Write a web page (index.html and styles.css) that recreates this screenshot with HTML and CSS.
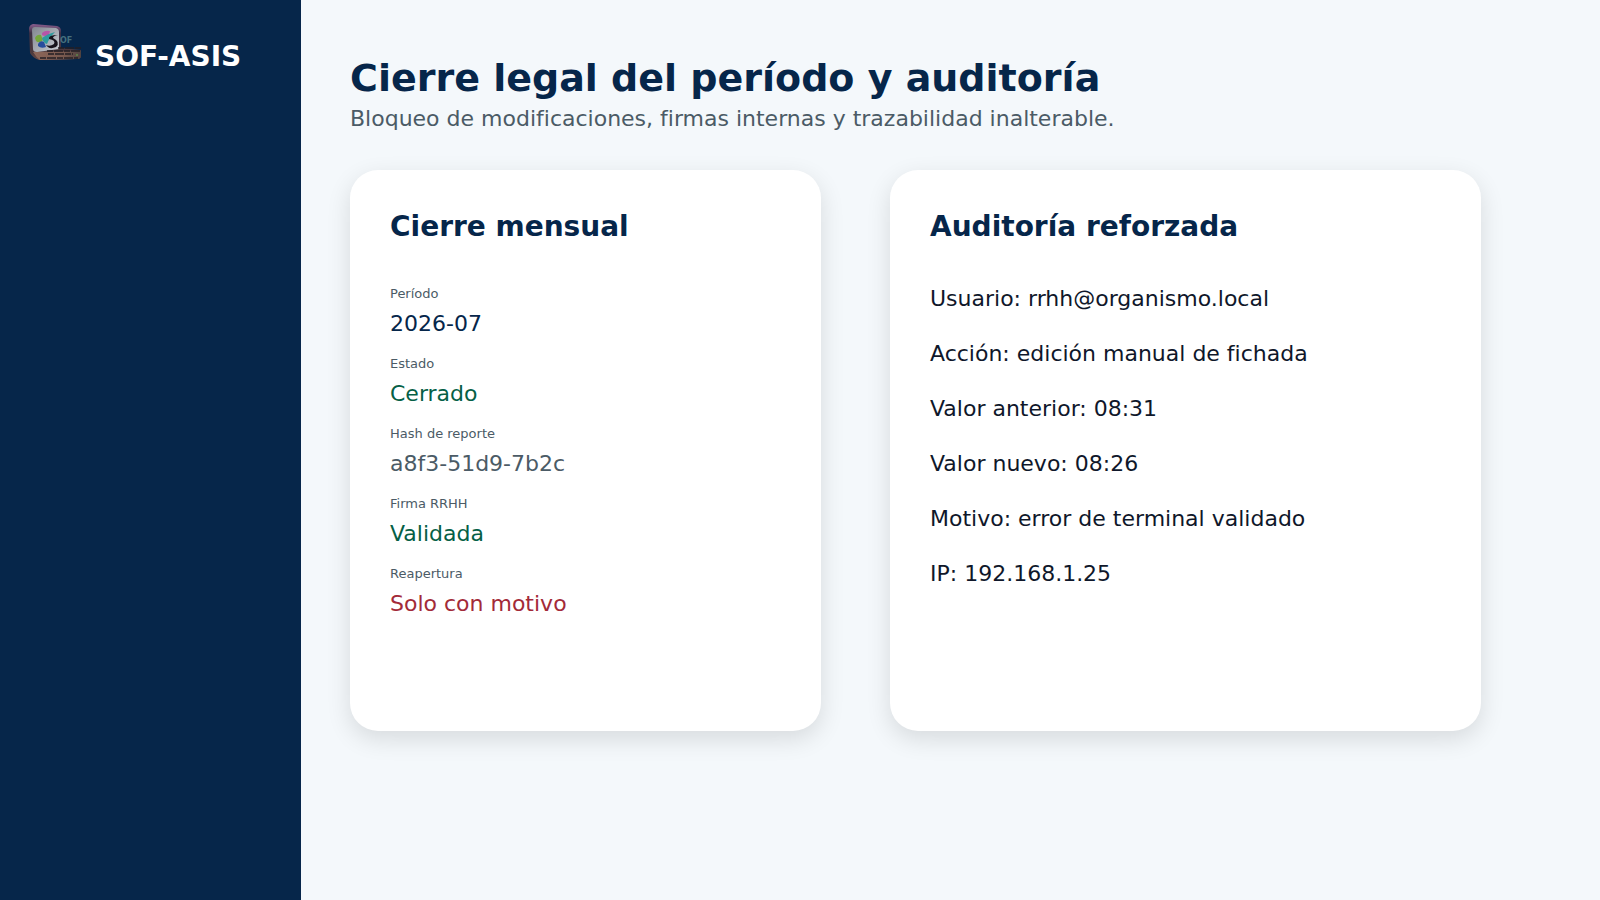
FILE: index.html
```html
<!DOCTYPE html>
<html lang="es">
<head>
<meta charset="utf-8">
<meta name="viewport" content="width=device-width, initial-scale=1">
<title>SOF-ASIS</title>
<link rel="stylesheet" href="styles.css">
</head>
<body>
<div class="app">
  <aside class="sidebar">
    <div class="brand">
      <svg class="brand-logo" viewBox="0 0 56 48" aria-hidden="true">
        <defs>
          <linearGradient id="frame" x1="0" y1="0" x2="0" y2="1">
            <stop offset="0" stop-color="#8a5f90"/><stop offset=".25" stop-color="#3d3044"/><stop offset=".8" stop-color="#4d3a3d"/><stop offset="1" stop-color="#6b4a45"/>
          </linearGradient>
          <linearGradient id="screen" x1="0" y1="0" x2="1" y2="1">
            <stop offset="0" stop-color="#80868f"/><stop offset="1" stop-color="#c9ccd3"/>
          </linearGradient>
          <linearGradient id="base" x1="0" y1="0" x2="1" y2="0">
            <stop offset="0" stop-color="#8d6658"/><stop offset=".6" stop-color="#7c5b50"/><stop offset="1" stop-color="#4f423f"/>
          </linearGradient>
        </defs>
        <path d="M5 0 L29 2 Q33 3 33 7 L33 24 L53 26 L53 33 Q52 35 49 35 L11 36 Q5 34 2 29 L1 5 Q1 1 5 0Z" fill="url(#frame)"/>
        <path d="M5 28 L53 27 L53 33 Q52 35 49 35 L12 36 Q8 33 5 28Z" fill="url(#base)"/>
        <path d="M7 3 L28 4 Q31 5 31 8 L31 25 L9 28 Q5 28 5 25 L4 6 Q4 3 7 3Z" fill="url(#screen)"/>
        <path d="M14 9 Q17 6 22 7 L21 11 Q17 13 14 11Z" fill="#b655a8"/>
        <path d="M7 14 Q9 10 13 11 L15 16 Q11 20 8 17Z" fill="#74a63c"/>
        <path d="M10 20 Q12 16 16 18 L18 23 Q13 25 10 22Z" fill="#284d9d"/>
        <path d="M14 14 Q19 10 27 8 Q21 14 19 20 Q15 19 14 14Z" fill="#2e9b9e"/>
        <path d="M30 11 Q20 11 21 15 Q28 16 26 20 Q22 23 18 21 Q21 26 28 23 Q33 18 25 14 Q25 12 30 11Z" fill="#17131c"/>
        <text x="32" y="19" class="logo-letters">OF</text>
        <path d="M30 24h24M19 27h33M20 30h25M12 34h38" stroke="#251f24" stroke-width="1.3" stroke-dasharray="6 1 9 1"/>
        <circle cx="49" cy="31" r="1" fill="#5e8848"/>
      </svg>
      <span class="brand-name">SOF-ASIS</span>
    </div>
  </aside>
  <main class="main">
    <header>
      <h1 class="page-title">Cierre legal del período y auditoría</h1>
      <p class="page-subtitle">Bloqueo de modificaciones, firmas internas y trazabilidad inalterable.</p>
    </header>
    <div class="cards">
      <section class="card">
        <h2 class="card-title">Cierre mensual</h2>
        <dl class="fields">
          <div class="field"><dt>Período</dt><dd class="navy">2026-07</dd></div>
          <div class="field"><dt>Estado</dt><dd class="green">Cerrado</dd></div>
          <div class="field"><dt>Hash de reporte</dt><dd class="gray">a8f3-51d9-7b2c</dd></div>
          <div class="field"><dt>Firma RRHH</dt><dd class="green">Validada</dd></div>
          <div class="field"><dt>Reapertura</dt><dd class="red">Solo con motivo</dd></div>
        </dl>
      </section>
      <section class="card">
        <h2 class="card-title">Auditoría reforzada</h2>
        <ul class="log">
          <li>Usuario: rrhh@organismo.local</li>
          <li>Acción: edición manual de fichada</li>
          <li>Valor anterior: 08:31</li>
          <li>Valor nuevo: 08:26</li>
          <li>Motivo: error de terminal validado</li>
          <li>IP: 192.168.1.25</li>
        </ul>
      </section>
    </div>
  </main>
</div>
</body>
</html>
```
FILE: styles.css
```css
* {
  box-sizing: border-box;
  margin: 0;
  padding: 0;
}

body {
  background: #f4f8fb;
  color: #0f172a;
  font-family: "DejaVu Sans", sans-serif;
  font-size: 22px;
  line-height: 30px;
}

.app {
  display: grid;
  grid-template-columns: 301px 1fr;
  min-height: 100vh;
}

.sidebar {
  background: #06264a;
  padding: 24px 28px;
}

.brand {
  display: flex;
  align-items: flex-start;
  gap: 11px;
}

.brand-logo {
  width: 56px;
  height: 48px;
}

.logo-letters {
  fill: #45707d;
  font: bold 8px "DejaVu Sans", sans-serif;
}

.brand-name {
  padding-top: 16px;
  color: #fff;
  font-size: 28px;
  font-weight: 700;
  line-height: 34px;
}

.main {
  padding: 56px 119px 56px 49px;
}

.page-title {
  color: #06264a;
  font-size: 38px;
  line-height: 44px;
}

.page-subtitle {
  margin-top: 4px;
  color: #4b5b66;
}

.cards {
  display: grid;
  grid-template-columns: 471fr 591fr;
  gap: 69px;
  margin-top: 36px;
}

.card {
  min-height: 561px;
  padding: 40px;
  border-radius: 28px;
  background: #fff;
  box-shadow: 0 8px 24px rgba(0, 0, 0, 0.12);
}

.card-title {
  margin-bottom: 40px;
  color: #06264a;
  font-size: 28px;
  line-height: 34px;
}

.fields {
  display: grid;
  gap: 15px;
}

.field {
  display: grid;
  gap: 5px;
}

.field dt {
  color: #4b5b66;
  font-size: 13px;
  line-height: 20px;
}

.navy { color: #06264a; }
.green { color: #065f46; }
.gray { color: #4b5b66; }
.red { color: #a32a38; }

.log {
  display: grid;
  gap: 25px;
  list-style: none;
}
```
